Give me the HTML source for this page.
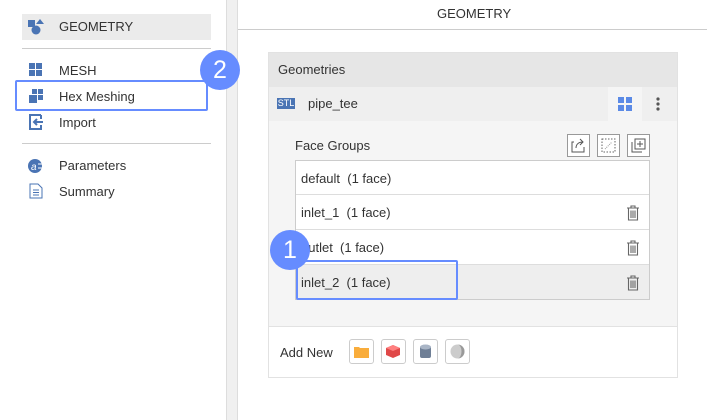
<!DOCTYPE html>
<html><head><style>
*{margin:0;padding:0;box-sizing:border-box}
body{width:707px;height:420px;background:#fff;font-family:"Liberation Sans",sans-serif;font-size:13px;color:#333;position:relative;overflow:hidden}
.a{position:absolute}
.t{position:absolute;white-space:nowrap;line-height:16px}
.row{position:absolute;left:296px;width:353px;height:35px;border-bottom:1px solid #ddd;background:#fff}
.row span{position:absolute;left:5px;top:10px;white-space:nowrap}
.row svg{position:absolute;left:330px;top:10px}
.ib{position:absolute;top:134px;width:23px;height:23px;border:1px solid #999;background:#fff}
.ab{position:absolute;top:339px;width:25px;height:25px;border:1px solid #ccc;border-radius:3px;background:#fff}
.c{position:absolute;width:40px;height:40px;border-radius:50%;background:#668cff;color:#fff;font-size:25px;text-align:center;line-height:40px}
</style></head><body>
<svg width="0" height="0" style="position:absolute"><defs><g id="tr"><path d="M1 3H13M5 3V1H9V3M2.5 3V15H11.5V3M5 5.5V13M7 5.5V13M9 5.5V13" stroke="#666" stroke-width="1.1" fill="none"/></g></defs></svg>
<div class="a" style="left:22px;top:14px;width:189px;height:26px;background:#ebebeb"></div>
<svg class="a" style="left:28px;top:19px" width="16" height="16"><rect x="0" y="1" width="7" height="7" fill="#4a74b4"/><circle cx="8" cy="11" r="4.5" fill="#4a74b4"/><path d="M12 0L16 5H8Z" fill="#4a74b4"/></svg>
<div class="t" style="left:59px;top:19px">GEOMETRY</div>
<div class="a" style="left:22px;top:48px;width:189px;height:1px;background:#ccc"></div>
<svg class="a" style="left:29px;top:63px" width="14" height="14"><rect x="0" y="0" width="6" height="6" fill="#4a74b4"/><rect x="7" y="0" width="6" height="6" fill="#4a74b4"/><rect x="0" y="7" width="6" height="6" fill="#4a74b4"/><rect x="7" y="7" width="6" height="6" fill="#4a74b4"/></svg>
<div class="t" style="left:59px;top:63px">MESH</div>
<svg class="a" style="left:29px;top:89px" width="14" height="14"><rect x="3" y="0" width="5" height="5" fill="#4a74b4"/><rect x="9" y="0" width="5" height="5" fill="#4a74b4"/><rect x="0" y="6" width="8" height="8" fill="#4a74b4"/><rect x="9" y="6" width="5" height="5" fill="#4a74b4"/></svg>
<div class="t" style="left:59px;top:89px">Hex Meshing</div>
<svg class="a" style="left:28px;top:114px" width="16" height="16"><path d="M13 1H2V15H13V11M13 5V1" stroke="#4a74b4" stroke-width="2" fill="none"/><path d="M15 8H6M9 5L6 8L9 11" stroke="#4a74b4" stroke-width="2" fill="none"/></svg>
<div class="t" style="left:59px;top:115px">Import</div>
<div class="a" style="left:22px;top:143px;width:189px;height:1px;background:#ccc"></div>
<svg class="a" style="left:28px;top:158px" width="16" height="16"><circle cx="7" cy="8" r="7" fill="#4a74b4"/><text x="3" y="12" font-size="10" fill="#fff" font-style="italic">a</text><path d="M10 6H15M10 10H15" stroke="#fff"/></svg>
<div class="t" style="left:59px;top:158px">Parameters</div>
<svg class="a" style="left:29px;top:183px" width="14" height="16"><path d="M1 1H9L13 5V15H1Z" stroke="#4a74b4" fill="none"/><path d="M4 7H10M4 9.5H10M4 12H10" stroke="#4a74b4"/></svg>
<div class="t" style="left:59px;top:184px">Summary</div>
<div class="a" style="left:15px;top:80px;width:193px;height:31px;border:2px solid #668cff;border-radius:2px"></div>

<div class="a" style="left:226px;top:0;width:12px;height:420px;background:#f0f0f0;border-left:1px solid #ddd;border-right:1px solid #ddd"></div>
<div class="c" style="left:200px;top:50px">2</div>
<div class="t" style="left:437px;top:6px">GEOMETRY</div>
<div class="a" style="left:238px;top:29px;width:469px;height:1px;background:#ccc"></div>

<div class="a" style="left:268px;top:52px;width:410px;height:326px;border:1px solid #e2e2e2;background:#f5f5f5"></div>
<div class="a" style="left:269px;top:53px;width:408px;height:34px;background:#e6e6e6"></div>
<div class="t" style="left:278px;top:62px">Geometries</div>
<div class="a" style="left:269px;top:87px;width:408px;height:34px;background:#efefef"></div>
<div class="a" style="left:277px;top:98px;width:18px;height:11px;background:#4a74b4;color:#fff;font-size:9px;line-height:11px;text-align:center">STL</div>
<div class="t" style="left:308px;top:96px">pipe_tee</div>
<div class="a" style="left:608px;top:87px;width:34px;height:34px;background:#f5f5f5"></div>
<svg class="a" style="left:618px;top:97px" width="14" height="14"><rect x="0" y="0" width="6" height="6" fill="#5b8ae6"/><rect x="8" y="0" width="6" height="6" fill="#5b8ae6"/><rect x="0" y="8" width="6" height="6" fill="#5b8ae6"/><rect x="8" y="8" width="6" height="6" fill="#5b8ae6"/></svg>
<svg class="a" style="left:656px;top:97px" width="4" height="14"><circle cx="2" cy="2" r="1.6" fill="#555"/><circle cx="2" cy="7" r="1.6" fill="#555"/><circle cx="2" cy="12" r="1.6" fill="#555"/></svg>
<div class="t" style="left:295px;top:138px">Face Groups</div>
<div class="ib" style="left:567px"><svg width="21" height="21"><path d="M6 7H4V17H16V12" stroke="#555" fill="none"/><path d="M8 13C8 9 11 7 15 7M12 4L15 7L12 10" stroke="#555" fill="none"/></svg></div>
<div class="ib" style="left:597px"><svg width="21" height="21"><rect x="4" y="4" width="13" height="13" stroke="#666" stroke-dasharray="1.5 1.5" fill="none"/><path d="M7 14L14 7" stroke="#999" stroke-dasharray="1 1"/></svg></div>
<div class="ib" style="left:627px"><svg width="21" height="21"><path d="M4 7V17H14" stroke="#555" fill="none"/><rect x="7" y="4" width="10" height="10" stroke="#555" fill="none"/><path d="M12 6V12M9 9H15" stroke="#555"/></svg></div>
<div class="a" style="left:295px;top:160px;width:355px;height:140px;border:1px solid #ccc;background:#fff"></div>
<div class="row" style="top:161px;height:34px"><span>default&nbsp; (1 face)</span></div>
<div class="row" style="top:195px"><span>inlet_1&nbsp; (1 face)</span><svg width="14" height="16"><use href="#tr"/></svg></div>
<div class="row" style="top:230px"><span>outlet&nbsp; (1 face)</span><svg width="14" height="16"><use href="#tr"/></svg></div>
<div class="row" style="top:265px;height:34px;background:#eee;border-bottom:none"><span>inlet_2&nbsp; (1 face)</span><svg width="14" height="16"><use href="#tr"/></svg></div>
<div class="a" style="left:296px;top:260px;width:162px;height:40px;border:2px solid #668cff;border-radius:2px"></div>
<div class="c" style="left:270px;top:230px">1</div>
<div class="a" style="left:269px;top:326px;width:408px;height:51px;background:#fff;border-top:1px solid #e2e2e2"></div>
<div class="t" style="left:280px;top:345px">Add New</div>
<div class="ab" style="left:349px"><svg width="23" height="23"><path d="M4 7H9L10 8H19V18H4Z" fill="#f9ad3c"/></svg></div>
<div class="ab" style="left:381px"><svg width="23" height="23"><path d="M11 5L18 8V15L11 18L4 15V8Z" fill="#e04848"/><path d="M4 8L11 5L18 8L11 11Z" fill="#ff8080"/></svg></div>
<div class="ab" style="left:413px"><svg width="23" height="23"><rect x="6" y="6" width="11" height="12" rx="2" fill="#6f7f96"/><ellipse cx="11.5" cy="7" rx="5.5" ry="2.5" fill="#a9b5c6"/></svg></div>
<div class="ab" style="left:445px"><svg width="23" height="23"><circle cx="11.5" cy="11.5" r="7" fill="#ccc"/><path d="M11.5 4.5A7 7 0 0 1 11.5 18.5A4 7 0 0 0 11.5 4.5Z" fill="#999"/></svg></div>
</body></html>
